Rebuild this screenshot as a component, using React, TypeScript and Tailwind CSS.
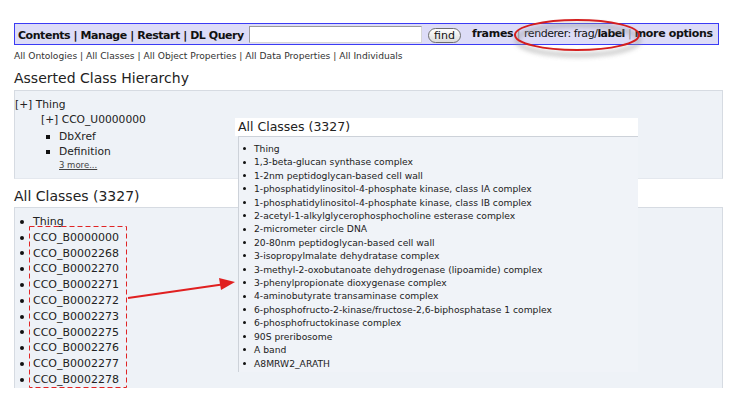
import React from "react";

const leftItems = [
  "Thing",
  "CCO_B0000000",
  "CCO_B0002268",
  "CCO_B0002270",
  "CCO_B0002271",
  "CCO_B0002272",
  "CCO_B0002273",
  "CCO_B0002275",
  "CCO_B0002276",
  "CCO_B0002277",
  "CCO_B0002278",
];

const overlayItems = [
  "Thing",
  "1,3-beta-glucan synthase complex",
  "1-2nm peptidoglycan-based cell wall",
  "1-phosphatidylinositol-4-phosphate kinase, class IA complex",
  "1-phosphatidylinositol-4-phosphate kinase, class IB complex",
  "2-acetyl-1-alkylglycerophosphocholine esterase complex",
  "2-micrometer circle DNA",
  "20-80nm peptidoglycan-based cell wall",
  "3-isopropylmalate dehydratase complex",
  "3-methyl-2-oxobutanoate dehydrogenase (lipoamide) complex",
  "3-phenylpropionate dioxygenase complex",
  "4-aminobutyrate transaminase complex",
  "6-phosphofructo-2-kinase/fructose-2,6-biphosphatase 1 complex",
  "6-phosphofructokinase complex",
  "90S preribosome",
  "A band",
  "A8MRW2_ARATH",
];

function Bullet() {
  return <span className="inline-block w-[4px] h-[4px] rounded-full bg-[#111] shrink-0" />;
}

export default function App() {
  return (
    <div className="relative w-[744px] h-[412px] bg-white overflow-hidden font-['DejaVu_Sans',Verdana,sans-serif] text-[#222]">
      {/* top bar */}
      <div className="mt-[23px] ml-[14px] w-[705px] h-[22px] border border-[#3b3bf5] bg-[#dddcf7] flex items-center leading-none whitespace-nowrap">
        <span className="ml-[3px] w-[227px] font-bold text-[11px] tracking-[-0.45px] text-[#111] mt-[2px] shrink-0">Contents | Manage | Restart | DL Query</span>
        <div className="ml-[4px] w-[173px] h-[17px] shrink-0 bg-white border border-[#9a9a9a] border-r-[#d6d6d6] border-b-[#d6d6d6]" />
        <div className="ml-[6px] mt-[2px] w-[33px] h-[15px] shrink-0 rounded-full border border-[#6e6e6e] bg-gradient-to-b from-white to-[#dcdcdc] flex items-center justify-center text-[11px] text-[#111]">
          find
        </div>
        <div className="ml-[11px] flex items-center -mt-[2px] text-[#111] shrink-0 text-[11px]">
          <span className="font-bold w-[41px] tracking-[-0.3px]">frames</span>
          <span className="w-[11px] text-center text-[#888] font-normal">|</span>
          <span className="tracking-[-0.45px] shrink-0">renderer: frag/</span>
          <span className="font-bold tracking-[-0.6px] shrink-0">label</span>
          <span className="w-[10px] text-center text-[#888]">|</span>
          <span className="font-bold tracking-[-0.35px]">more options</span>
        </div>
      </div>

      {/* links row */}
      <div className="mt-[5px] ml-[14px] text-[9.15px] leading-[12px] text-[#333] whitespace-nowrap">
        All Ontologies | All Classes | All Object Properties | All Data Properties | All Individuals
      </div>

      {/* Asserted class hierarchy */}
      <div className="mt-[7px] ml-[14px] text-[14px] leading-[18px] text-[#222]">Asserted Class Hierarchy</div>
      <div className="mt-[3px] ml-[14px] w-[709px] h-[89px] bg-[#eef2f7] border-t border-l border-r border-[#d6dbe2] border-b border-b-[#e4e8ee] pt-[6px] text-[10.7px] leading-[15px] text-[#222]">
        <div>[+] Thing</div>
        <div className="ml-[26px]">[+] CCO_U0000000</div>
        <div className="ml-[31px] mt-[2px] flex items-center gap-[9px]">
          <span className="inline-block w-[4px] h-[4px] bg-[#111]" />
          <span>DbXref</span>
        </div>
        <div className="ml-[31px] flex items-center gap-[9px]">
          <span className="inline-block w-[4px] h-[4px] bg-[#111]" />
          <span>Definition</span>
        </div>
        <div className="ml-[44px] text-[8.5px] leading-[12px] underline text-[#444]">3 more...</div>
      </div>

      {/* All classes */}
      <div className="mt-[8px] ml-[14px] text-[14px] leading-[18px] text-[#222]">All Classes (3327)</div>
      <div className="mt-[2px] ml-[14px] w-[709px] h-[181px] bg-[#eef2f7] border-t border-l border-r border-[#d6dbe2] pt-[6px] text-[11px] leading-[15.8px] text-[#222]">
        {leftItems.map((t) => (
          <div key={t} className="flex items-center pl-[5px] gap-[9px]">
            <Bullet />
            <span>{t}</span>
          </div>
        ))}
      </div>

      {/* overlay panel */}
      <div className="absolute left-[235px] top-[118px] w-[403px] h-[254px] flex flex-col">
        <div className="h-[18px] bg-white pl-[3px] text-[12.5px] leading-[18px] text-[#222]">All Classes (3327)</div>
        <div className="ml-[3px] flex-1 bg-[#f0f3f8] border-t border-l border-[#cdd2d9] pt-[5px] text-[9.2px] leading-[13.4px] text-[#222]">
          {overlayItems.map((t) => (
            <div key={t} className="flex items-center pl-[4px] gap-[8px] whitespace-nowrap">
              <span className="inline-block w-[3px] h-[3px] rounded-full bg-[#111] shrink-0" />
              <span>{t}</span>
            </div>
          ))}
        </div>
      </div>

      {/* annotations */}
      <svg className="absolute left-0 top-0 pointer-events-none" width="744" height="412" viewBox="0 0 744 412">
        <defs>
          <filter id="sh" x="-20%" y="-50%" width="140%" height="200%">
            <feGaussianBlur stdDeviation="2.5" />
          </filter>
        </defs>
        <ellipse cx="578" cy="40" rx="61" ry="15" fill="none" stroke="#9a9a9a" strokeWidth="3" filter="url(#sh)" opacity="0.8" />
        <ellipse cx="577" cy="35" rx="62" ry="15" fill="none" stroke="#d41f1f" strokeWidth="2" />
        <rect x="29.5" y="226.5" width="97" height="161" fill="none" stroke="#e02424" strokeWidth="1" strokeDasharray="5 3" />
        <line x1="128" y1="298" x2="222" y2="284.5" stroke="#e02020" strokeWidth="2" />
        <polygon points="235,282 219,278 221,290" fill="#e02020" />
      </svg>
    </div>
  );
}
